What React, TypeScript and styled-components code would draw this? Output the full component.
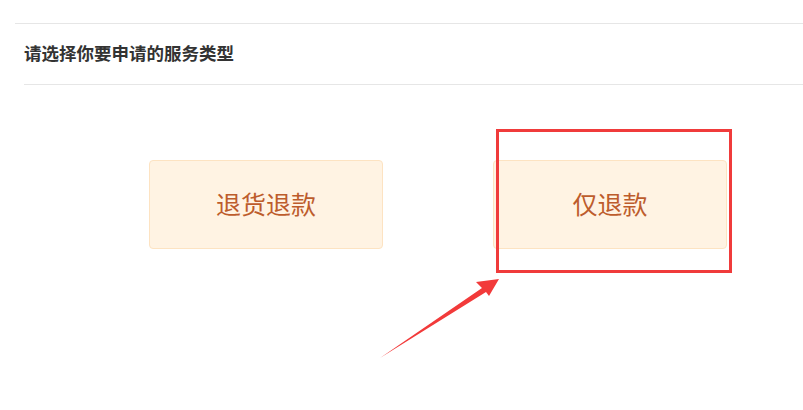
import styled, { createGlobalStyle } from "styled-components";

const GlobalStyle = createGlobalStyle`
  html, body {
    margin: 0;
    padding: 0;
    background: #ffffff;
  }
  body {
    font-family: "Noto Sans CJK SC", "Noto Sans", sans-serif;
  }
`;

const Page = styled.div`
  position: relative;
  width: 803px;
  height: 410px;
  overflow: hidden;
  padding-top: 23px;
  box-sizing: border-box;
`;

const Section = styled.section`
  margin-left: 15px;
  border-top: 1px solid #e6e6e6;
`;

const Header = styled.div`
  margin-left: 9px;
  height: 60px;
  display: flex;
  align-items: center;
  border-bottom: 1px solid #e6e6e6;
`;

const Title = styled.div`
  font-family: "Noto Sans CJK SC", sans-serif;
  font-size: 17.5px;
  line-height: 22px;
  font-weight: bold;
  color: #333333;
  transform: translateY(-1px);
`;

const Options = styled.ul`
  list-style: none;
  margin: 75px 0 0;
  padding: 0 0 0 134px;
  display: flex;
  gap: 110px;
`;

const Option = styled.li<{ $width: number }>`
  width: ${(p) => p.$width}px;
  height: 89px;
  box-sizing: border-box;
  display: flex;
  align-items: center;
  justify-content: center;
  padding-bottom: 4px;
  background: #fff3e3;
  border: 1px solid #fde3c2;
  border-radius: 4px;
  color: #bd5c2c;
  font-size: 25px;
  cursor: pointer;
`;

const Highlight = styled.div`
  position: absolute;
  left: 496px;
  top: 129px;
  width: 236px;
  height: 144px;
  box-sizing: border-box;
  border: 3px solid #f03b3b;
  pointer-events: none;
`;

const Arrow = styled.svg`
  position: absolute;
  left: 0;
  top: 0;
  pointer-events: none;
`;

const services = [
  { id: "return-refund", label: "退货退款", width: 234 },
  { id: "refund-only", label: "仅退款", width: 234 },
];

const App = () => {
  return (
    <>
      <GlobalStyle />
      <Page>
        <Section>
          <Header>
            <Title>请选择你要申请的服务类型</Title>
          </Header>
          <Options>
            {services.map((s) => (
              <Option key={s.id} $width={s.width}>
                {s.label}
              </Option>
            ))}
          </Options>
        </Section>
        <Highlight />
        <Arrow width="803" height="410" viewBox="0 0 803 410">
          <polygon
            points="499,279 476,282 482,288 380,358 486,292 489,296"
            fill="#f23a3a"
          />
        </Arrow>
      </Page>
    </>
  );
};

export default App;
